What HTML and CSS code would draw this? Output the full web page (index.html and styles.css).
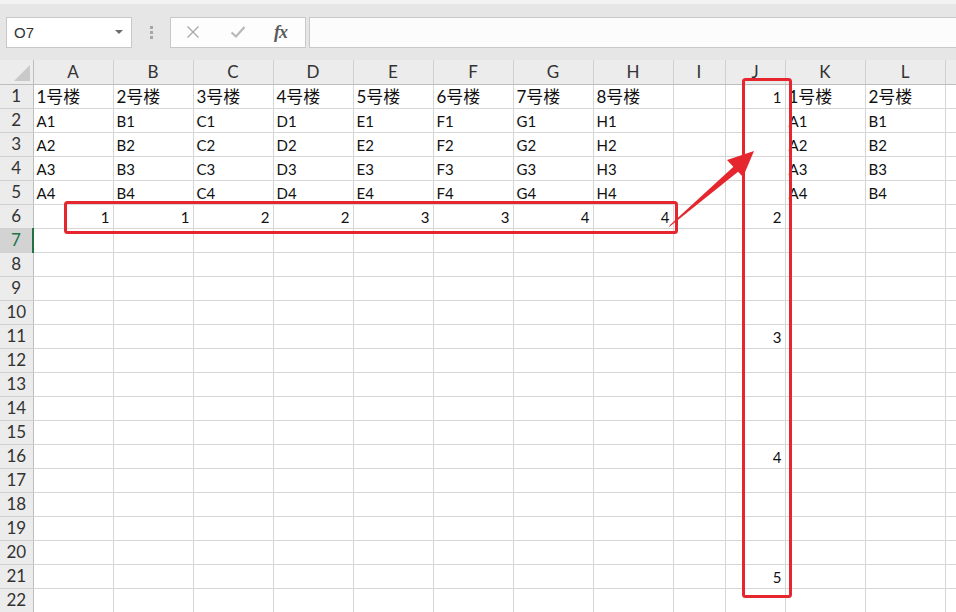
FILE: index.html
```html
<!DOCTYPE html>
<html>
<head>
<meta charset="utf-8">
<link rel="stylesheet" href="styles.css">
</head>
<body>
<div class="app">
  <div class="toolbar">
    <div class="namebox"><span class="nb-text">O7</span><span class="nb-arrow"></span></div>
    <div class="sep"><span></span><span></span><span></span></div>
    <div class="fxbox">
      <svg class="ico" width="14" height="14" viewBox="0 0 14 14"><path d="M1.5 1.5 L12.5 12.5 M12.5 1.5 L1.5 12.5" stroke="#a8a8a8" stroke-width="1.3" fill="none"/></svg>
      <svg class="ico" width="16" height="14" viewBox="0 0 16 14"><path d="M1.5 7.5 L6 11.5 L14.5 2" stroke="#b8b8b8" stroke-width="2.2" fill="none"/></svg>
      <span class="fx">fx</span>
    </div>
    <div class="formula"></div>
  </div>
  <table class="sheet">
    <colgroup>
      <col class="c-rh"><col class="c80"><col class="c80"><col class="c80"><col class="c80"><col class="c80"><col class="c80"><col class="c80"><col class="c80"><col class="c-i"><col class="c-j"><col class="c80"><col class="c80"><col class="c-m">
    </colgroup>
    <thead>
      <tr><th class="corner"><span class="tri"></span></th><th>A</th><th>B</th><th>C</th><th>D</th><th>E</th><th>F</th><th>G</th><th>H</th><th>I</th><th>J</th><th>K</th><th>L</th><th></th></tr>
    </thead>
    <tbody>
      <tr class="big"><th>1</th><td>1号楼</td><td>2号楼</td><td>3号楼</td><td>4号楼</td><td>5号楼</td><td>6号楼</td><td>7号楼</td><td>8号楼</td><td></td><td class="num small">1</td><td>1号楼</td><td>2号楼</td><td></td></tr>
      <tr><th>2</th><td>A1</td><td>B1</td><td>C1</td><td>D1</td><td>E1</td><td>F1</td><td>G1</td><td>H1</td><td></td><td></td><td>A1</td><td>B1</td><td></td></tr>
      <tr><th>3</th><td>A2</td><td>B2</td><td>C2</td><td>D2</td><td>E2</td><td>F2</td><td>G2</td><td>H2</td><td></td><td></td><td>A2</td><td>B2</td><td></td></tr>
      <tr><th>4</th><td>A3</td><td>B3</td><td>C3</td><td>D3</td><td>E3</td><td>F3</td><td>G3</td><td>H3</td><td></td><td></td><td>A3</td><td>B3</td><td></td></tr>
      <tr><th>5</th><td>A4</td><td>B4</td><td>C4</td><td>D4</td><td>E4</td><td>F4</td><td>G4</td><td>H4</td><td></td><td></td><td>A4</td><td>B4</td><td></td></tr>
      <tr><th>6</th><td class="num">1</td><td class="num">1</td><td class="num">2</td><td class="num">2</td><td class="num">3</td><td class="num">3</td><td class="num">4</td><td class="num">4</td><td></td><td class="num">2</td><td></td><td></td><td></td></tr>
      <tr class="sel"><th>7</th><td></td><td></td><td></td><td></td><td></td><td></td><td></td><td></td><td></td><td></td><td></td><td></td><td></td></tr>
      <tr><th>8</th><td></td><td></td><td></td><td></td><td></td><td></td><td></td><td></td><td></td><td></td><td></td><td></td><td></td></tr>
      <tr><th>9</th><td></td><td></td><td></td><td></td><td></td><td></td><td></td><td></td><td></td><td></td><td></td><td></td><td></td></tr>
      <tr><th>10</th><td></td><td></td><td></td><td></td><td></td><td></td><td></td><td></td><td></td><td></td><td></td><td></td><td></td></tr>
      <tr><th>11</th><td></td><td></td><td></td><td></td><td></td><td></td><td></td><td></td><td></td><td class="num">3</td><td></td><td></td><td></td></tr>
      <tr><th>12</th><td></td><td></td><td></td><td></td><td></td><td></td><td></td><td></td><td></td><td></td><td></td><td></td><td></td></tr>
      <tr><th>13</th><td></td><td></td><td></td><td></td><td></td><td></td><td></td><td></td><td></td><td></td><td></td><td></td><td></td></tr>
      <tr><th>14</th><td></td><td></td><td></td><td></td><td></td><td></td><td></td><td></td><td></td><td></td><td></td><td></td><td></td></tr>
      <tr><th>15</th><td></td><td></td><td></td><td></td><td></td><td></td><td></td><td></td><td></td><td></td><td></td><td></td><td></td></tr>
      <tr><th>16</th><td></td><td></td><td></td><td></td><td></td><td></td><td></td><td></td><td></td><td class="num">4</td><td></td><td></td><td></td></tr>
      <tr><th>17</th><td></td><td></td><td></td><td></td><td></td><td></td><td></td><td></td><td></td><td></td><td></td><td></td><td></td></tr>
      <tr><th>18</th><td></td><td></td><td></td><td></td><td></td><td></td><td></td><td></td><td></td><td></td><td></td><td></td><td></td></tr>
      <tr><th>19</th><td></td><td></td><td></td><td></td><td></td><td></td><td></td><td></td><td></td><td></td><td></td><td></td><td></td></tr>
      <tr><th>20</th><td></td><td></td><td></td><td></td><td></td><td></td><td></td><td></td><td></td><td></td><td></td><td></td><td></td></tr>
      <tr><th>21</th><td></td><td></td><td></td><td></td><td></td><td></td><td></td><td></td><td></td><td class="num">5</td><td></td><td></td><td></td></tr>
      <tr><th>22</th><td></td><td></td><td></td><td></td><td></td><td></td><td></td><td></td><td></td><td></td><td></td><td></td><td></td></tr>
    </tbody>
  </table>
  <svg class="annot" width="956" height="612" viewBox="0 0 956 612">
    <rect x="65.5" y="202.5" width="611" height="30" rx="2" fill="none" stroke="#e5262f" stroke-width="3"/>
    <rect x="743.5" y="79.5" width="47" height="517" rx="2" fill="none" stroke="#e5262f" stroke-width="3"/>
    <polygon points="668.5,227.5 670.5,224.5 737,163.5 741.5,169" fill="#e5262f"/>
    <polygon points="754,151 727,160 743,177" fill="#e5262f"/>
  </svg>
</div>
</body>
</html>
```
FILE: styles.css
```css
html, body {
  margin: 0;
  padding: 0;
  background: #ffffff;
}
body {
  font-family: Lato, "Liberation Sans", "Noto Sans CJK SC", sans-serif;
  color: #222;
  overflow: hidden;
}
.app {
  position: relative;
  width: 956px;
  height: 612px;
  overflow: hidden;
}
.toolbar {
  display: flex;
  align-items: center;
  height: 56px;
  border-top: 4px solid #f3f3f3;
  background: #e6e6e6;
  padding-left: 6px;
  box-sizing: content-box;
}
.namebox {
  height: 29px;
  border: 1px solid #c8c8c8;
  background: #fff;
  display: flex;
  align-items: center;
  justify-content: space-between;
  padding: 0 8px 0 7px;
  box-sizing: content-box;
  width: 109px;
}
.nb-text {
  font-family: "Liberation Sans", sans-serif;
  font-size: 15px;
  color: #333;
}
.nb-arrow {
  width: 0;
  height: 0;
  border-left: 4px solid transparent;
  border-right: 4px solid transparent;
  border-top: 4px solid #6d6d6d;
}
.sep {
  width: 38px;
  display: flex;
  flex-direction: column;
  align-items: center;
  gap: 2px;
}
.sep span {
  width: 3px;
  height: 3px;
  background: #a6a6a6;
}
.fxbox {
  width: 134px;
  height: 29px;
  border: 1px solid #c8c8c8;
  background: #fdfdfd;
  display: flex;
  align-items: center;
  box-sizing: content-box;
}
.fxbox .ico:first-child {
  margin-left: 15px;
}
.fxbox .ico + .ico {
  margin-left: 30px;
}
.fx {
  margin-left: 28px;
  font-family: "Liberation Serif", serif;
  font-style: italic;
  font-weight: bold;
  font-size: 18px;
  color: #5a5a5a;
  letter-spacing: -1px;
}
.formula {
  flex: 1;
  height: 29px;
  margin-left: 3px;
  margin-right: -2px;
  border: 1px solid #c8c8c8;
  background: #fdfcfd;
}
.sheet {
  border-collapse: collapse;
  table-layout: fixed;
  width: 959px;
}
.c-rh { width: 33px; }
.c80 { width: 80px; }
.c-i { width: 52px; }
.c-j { width: 60px; }
.c-m { width: 14px; }
.sheet th, .sheet td {
  padding: 0;
  box-sizing: border-box;
  overflow: hidden;
  white-space: nowrap;
}
.sheet thead th {
  height: 24px;
  background: #ececec;
  font-weight: normal;
  font-size: 17px;
  color: #333;
  border-right: 1px solid #d0d0d0;
  border-bottom: 1px solid #bdbdbd;
  text-align: center;
  vertical-align: middle;
  line-height: 22px;
}
.sheet thead th.corner {
  position: relative;
  border-right: 1px solid #bdbdbd;
}
.tri {
  position: absolute;
  right: 3px;
  bottom: 3px;
  width: 0;
  height: 0;
  border-left: 16px solid transparent;
  border-bottom: 16px solid #c9c9c9;
}
.sheet tbody th {
  height: 24px;
  background: #ececec;
  font-weight: normal;
  font-size: 17px;
  color: #333;
  text-align: center;
  border-right: 1px solid #bdbdbd;
  border-bottom: 1px solid #d0d0d0;
  line-height: 22px;
}
.sheet tbody tr.sel th {
  background: #d3d3d3;
  color: #217346;
  border-right: 2px solid #217346;
}
.sheet td {
  height: 24px;
  border-right: 1px solid #d6d6d6;
  border-bottom: 1px solid #d6d6d6;
  font-size: 15px;
  color: #111;
  padding: 0 3px 2px 3px;
  vertical-align: bottom;
  line-height: 18px;
}
.sheet tr.big td {
  font-size: 17px;
  line-height: 22px;
  padding-bottom: 0;
}
.sheet td.num {
  text-align: right;
  padding-right: 3px;
}
.sheet tr.big td.small {
  font-size: 15px;
}
.annot {
  position: absolute;
  left: 0;
  top: 0;
  pointer-events: none;
}
```
